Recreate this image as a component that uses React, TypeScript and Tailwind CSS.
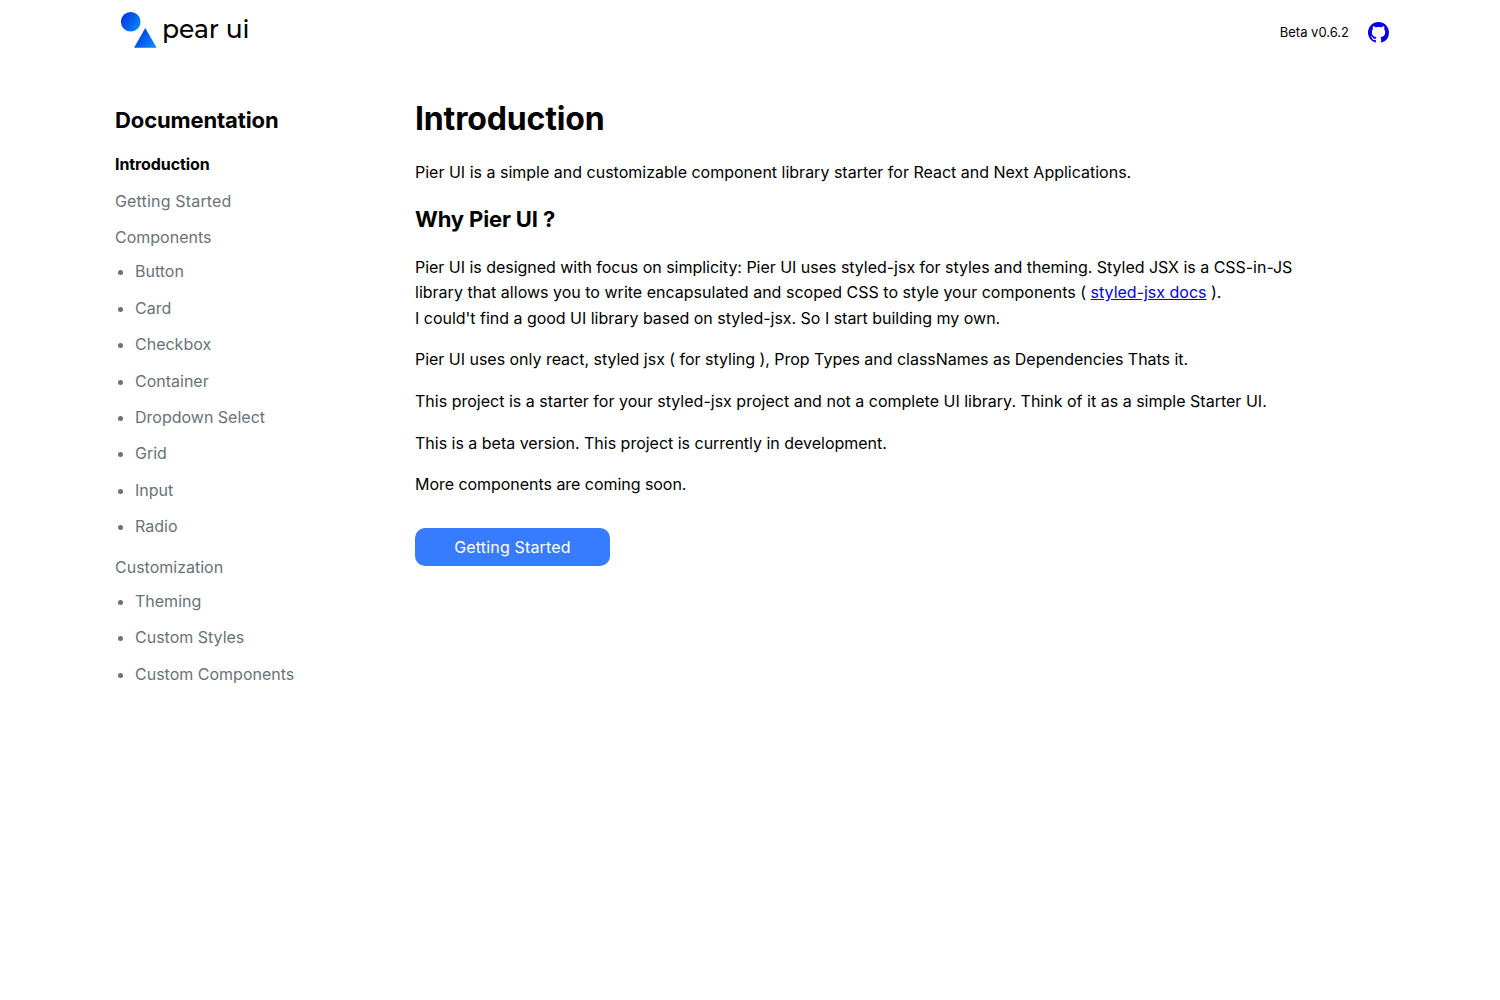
import React from "react";

const logoText = "pear ui";

function Logo() {
  return (
    <div className="flex h-[60px] items-start">
      <svg width="135" height="60" viewBox="115 0 135 60" role="img" aria-label="pear ui">
        <defs>
          <linearGradient id="shade" x1="0" y1="0.2" x2="1" y2="0.8">
            <stop offset="0" stopColor="#0030e0" />
            <stop offset="1" stopColor="#0a8cff" />
          </linearGradient>
        </defs>
        <circle cx="130.7" cy="21.8" r="9.8" fill="url(#shade)" />
        <path d="M145.3 28 156.6 47.8H134Z" fill="url(#shade)" />
        <text x="162" y="38" fontSize="25" fontWeight="500" textLength="87.5" fontFamily="Montserrat, Inter, sans-serif">{logoText}</text>
      </svg>
    </div>
  );
}

const components = ["Button", "Card", "Checkbox", "Container", "Dropdown Select", "Grid", "Input", "Radio"];
const customization = ["Theming", "Custom Styles", "Custom Components"];

function SubList({ items }: { items: string[] }) {
  return (
    <ul className="list-disc pl-5">
      {items.map((t) => (
        <li key={t} className="h-[36.4px] leading-[25.6px]">{t}</li>
      ))}
    </ul>
  );
}

export default function App() {
  return (
    <div className="min-h-[1000px] bg-white font-['Inter',sans-serif] text-base leading-[25.6px] text-black">
      <header className="mx-auto flex h-16 w-[1270px] justify-between">
        <Logo />
        <div className="-mr-1 flex items-center gap-[19px]">
          <span className="pt-0.5 text-[13px]">Beta v0.6.2</span>
          <svg width="21" height="21" viewBox="0 0 16 16" fill="#0000ee">
            <path d="M8 0C3.58 0 0 3.58 0 8c0 3.54 2.29 6.53 5.47 7.59.4.07.55-.17.55-.38 0-.19-.01-.82-.01-1.49-2.01.37-2.53-.49-2.69-.94-.09-.23-.48-.94-.82-1.13-.28-.15-.68-.52-.01-.53.63-.01 1.08.58 1.23.82.72 1.21 1.87.87 2.33.66.07-.52.28-.87.51-1.07-1.78-.2-3.64-.89-3.64-3.95 0-.87.31-1.59.82-2.15-.08-.2-.36-1.02.08-2.12 0 0 .67-.21 2.2.82.64-.18 1.32-.27 2-.27s1.36.09 2 .27c1.53-1.04 2.2-.82 2.2-.82.44 1.1.16 1.92.08 2.12.51.56.82 1.27.82 2.15 0 3.07-1.87 3.75-3.65 3.95.29.25.54.73.54 1.48 0 1.07-.01 1.93-.01 2.2 0 .21.15.46.55.38A8.01 8.01 0 0 0 16 8c0-4.42-3.58-8-8-8Z" />
          </svg>
        </div>
      </header>
      <div className="mx-auto flex w-[1270px]">
        <aside className="w-[300px] shrink-0 pt-10 text-[#697279]">
          <h2 className="text-[22px] font-bold leading-8 tracking-[-0.12px] text-black">Documentation</h2>
          <div className="mt-4 font-bold tracking-[-0.08px] text-black">Introduction</div>
          <div className="mt-[11px] tracking-[0.17px]">Getting Started</div>
          <div className="mt-[10.8px] mb-[8.9px]">Components</div>
          <SubList items={components} />
          <div className="mt-1 mb-[8.6px]">Customization</div>
          <SubList items={customization} />
        </aside>
        <main className="w-[900px] pt-[34px]">
          <h1 className="text-[32px] font-bold leading-[42px] tracking-[-0.15px]">Introduction</h1>
          <p className="mt-5">Pier UI is a simple and customizable component library starter for React and Next Applications.</p>
          <h2 className="mt-[17px] text-[22px] font-bold leading-8 tracking-[-0.14px]">Why Pier UI ?</h2>
          <p className="mt-5">
            <span className="tracking-[-0.027px]">Pier UI is designed with focus on simplicity: Pier UI uses styled-jsx for styles and theming. Styled JSX is a CSS-in-JS</span>
            <br />
            <span className="tracking-[0.01px]">library that allows you to write encapsulated and scoped CSS to style your components ( </span>
            <a href="#" className="text-[#0000ee] underline">styled-jsx docs</a> ).
            <br />
            <span className="tracking-[-0.02px]">I could't find a good UI library based on styled-jsx. So I start building my own.</span>
          </p>
          <p className="mt-4 tracking-[-0.023px]">Pier UI uses only react, styled jsx ( for styling ), Prop Types and classNames as Dependencies Thats it.</p>
          <p className="mt-4 tracking-[0.01px]">This project is a starter for your styled-jsx project and not a complete UI library. Think of it as a simple Starter UI.</p>
          <p className="mt-4 tracking-[-0.012px]">This is a beta version. This project is currently in development.</p>
          <p className="mt-4 tracking-[-0.04px]">More components are coming soon.</p>
          <button className="mt-[30px] block h-[38px] w-[195px] rounded-[10px] bg-[#377bff] pt-0.5 tracking-[0.17px] text-white">Getting Started</button>
        </main>
      </div>
    </div>
  );
}
